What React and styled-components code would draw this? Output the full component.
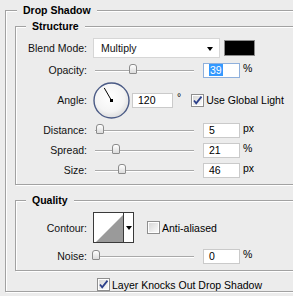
import React from "react";
import styled, { createGlobalStyle } from "styled-components";

const GlobalStyle = createGlobalStyle`
  html, body {
    margin: 0;
    padding: 0;
    background: #ececec;
    overflow: hidden;
  }
  body {
    font-family: "Liberation Sans", Arial, sans-serif;
    font-size: 10.5px;
    color: #111;
  }
`;

const Page = styled.div`
  width: 293px;
  height: 296px;
  overflow: hidden;
  box-sizing: border-box;
  padding: 10px 0 0 5px;
`;

const Group = styled.div`
  width: 330px;
  border: 1px solid #a2a2a2;
  box-shadow: inset 1px 1px 0 #fff, 1px 1px 0 #fff;
  margin: ${(p) => p.$margin || "0"};
  padding-bottom: ${(p) => p.$pb || 0}px;
`;

const Title = styled.div`
  display: table;
  height: 13px;
  line-height: 13px;
  margin: -7px 0 0 ${(p) => p.$indent}px;
  padding: 0 6px;
  background: #ececec;
  font-weight: bold;
  color: #000;
`;

const Rows = styled.div`
  margin-top: 5px;
`;

const Row = styled.div`
  display: flex;
  align-items: center;
  height: ${(p) => p.$h || 20}px;
  margin-bottom: ${(p) => p.$mb || 0}px;
  margin-top: ${(p) => p.$mt || 0}px;
  padding-left: ${(p) => p.$indent || 0}px;
`;

const Label = styled.div`
  flex: none;
  width: 71px;
  margin-right: 6px;
  text-align: right;
  white-space: nowrap;
`;

const Select = styled.div`
  flex: none;
  box-sizing: border-box;
  width: 127px;
  height: 20px;
  display: flex;
  align-items: center;
  justify-content: space-between;
  padding: 0 6px 0 7px;
  background: #fff;
  border: 1px solid #d6d6d6;
`;

const Arrow = styled.span`
  width: 0;
  height: 0;
  border-left: 3px solid transparent;
  border-right: 3px solid transparent;
  border-top: 4px solid #000;
  margin-top: 1px;
`;

const Swatch = styled.div`
  flex: none;
  box-sizing: border-box;
  width: 31px;
  height: 16px;
  margin-left: 4px;
  background: #000;
  border: 1px solid #8a8a8a;
`;

const SliderBox = styled.div`
  position: relative;
  flex: none;
  width: 101px;
  height: 20px;
`;

const Track = styled.div`
  position: absolute;
  left: 2px;
  right: 0;
  top: 10px;
  height: 1px;
  background: #a9a9a9;
  box-shadow: 0 1px 0 #fff;
`;

const Thumb = styled.div`
  position: absolute;
  top: 4px;
  width: 6px;
  height: 8px;
  margin-left: -4px;
  border: 1px solid #8b8b8b;
  border-radius: 3px 3px 1px 1px;
  background: linear-gradient(#ffffff, #dcdcdc);
`;

const Field = styled.div`
  flex: none;
  box-sizing: border-box;
  width: ${(p) => p.$w || 37}px;
  height: 15px;
  margin-left: ${(p) => (p.$ml === undefined ? 9 : p.$ml)}px;
  padding-left: 5px;
  line-height: 13px;
  background: #fff;
  border: 1px solid ${(p) => (p.$focus ? "#8fb0dc" : "#cacaca")};
  color: #000;
`;

const Selected = styled.span`
  background: #3399ff;
  color: #fff;
  padding: 0 1px;
`;

const Unit = styled.span`
  margin-left: ${(p) => p.$ml || 3}px;
  margin-top: ${(p) => p.$mt || -4}px;
  color: #000;
`;

const CheckText = styled.span`
  margin-left: 2px;
  color: #000;
  white-space: nowrap;
`;

const CheckWrap = styled.div`
  display: flex;
  align-items: center;
  margin-left: ${(p) => p.$ml || 0}px;
`;

const ContourBox = styled.div`
  flex: none;
  display: flex;
  box-sizing: border-box;
  width: 41px;
  height: 31px;
  border: 1px solid #3a3a3a;
  background: #fff;
`;

const ContourPreview = styled.div`
  flex: none;
  width: 29px;
  height: 29px;
  border-right: 1px solid #3a3a3a;
`;

const ContourButton = styled.div`
  flex: 1;
  display: flex;
  align-items: center;
  justify-content: center;
`;

const Slider = ({ pos }) => (
  <SliderBox>
    <Track />
    <Thumb style={{ left: pos }} />
  </SliderBox>
);

const Checkbox = ({ checked }) => (
  <svg width="13" height="13" viewBox="0 0 13 13">
    <defs>
      <linearGradient id="cbg" x1="0" y1="0" x2="1" y2="1">
        <stop offset="0" stopColor="#d8d8d8" />
        <stop offset="1" stopColor="#fafafa" />
      </linearGradient>
    </defs>
    <rect x="0.5" y="0.5" width="12" height="12" fill="#fff" stroke="#8f8f8f" />
    <rect x="2" y="2" width="9" height="9" fill="url(#cbg)" />
    {checked && (
      <path d="M3 6.5 L5.2 9.2 L10.5 2.6" fill="none" stroke="#2b3f8a" strokeWidth="1.8" />
    )}
  </svg>
);

const Dial = ({ angle }) => {
  const r = 14.5;
  const a = (angle * Math.PI) / 180;
  const x = 18.5 + Math.cos(a) * r;
  const y = 18.5 - Math.sin(a) * r;
  return (
    <svg width="37" height="37" viewBox="0 0 37 37" style={{ flex: "none" }}>
      <defs>
        <radialGradient id="dialg" cx="0.45" cy="0.4" r="0.6">
          <stop offset="0" stopColor="#ffffff" />
          <stop offset="0.7" stopColor="#f4f4f4" />
          <stop offset="1" stopColor="#dedede" />
        </radialGradient>
      </defs>
      <circle cx="18.5" cy="18.5" r="17.5" fill="url(#dialg)" stroke="#4a5a85" strokeWidth="1.4" />
      <line x1="18.5" y1="18.5" x2={x} y2={y} stroke="#000" strokeWidth="1" />
      <rect x="17" y="17" width="3" height="3" fill="#000" />
    </svg>
  );
};

const App = () => (
  <Page>
    <GlobalStyle />
    <Group>
      <Title $indent={11}>Drop Shadow</Title>
      <Group $margin="9px 0 0 9px" $pb={4}>
        <Title $indent={10}>Structure</Title>
        <Rows>
          <Row $mb={2}>
            <Label>Blend Mode:</Label>
            <Select>
              <span>Multiply</span>
              <Arrow />
            </Select>
            <Swatch />
          </Row>
          <Row>
            <Label>Opacity:</Label>
            <Slider pos={40} />
            <Field $focus>
              <Selected>39</Selected>
            </Field>
            <Unit>%</Unit>
          </Row>
          <Row $h={40}>
            <Label>Angle:</Label>
            <Dial angle={120} />
            <Field $w={41} $ml={2}>120</Field>
            <Unit $ml={4} $mt={-6}>°</Unit>
            <CheckWrap $ml={10}>
              <Checkbox checked />
              <CheckText>Use Global Light</CheckText>
            </CheckWrap>
          </Row>
          <Row>
            <Label>Distance:</Label>
            <Slider pos={7} />
            <Field>5</Field>
            <Unit>px</Unit>
          </Row>
          <Row>
            <Label>Spread:</Label>
            <Slider pos={23} />
            <Field>21</Field>
            <Unit>%</Unit>
          </Row>
          <Row>
            <Label>Size:</Label>
            <Slider pos={29} />
            <Field>46</Field>
            <Unit>px</Unit>
          </Row>
        </Rows>
      </Group>
      <Group $margin="15px 0 0 9px" $pb={4}>
        <Title $indent={10}>Quality</Title>
        <Row $h={31} $mt={5}>
          <Label>Contour:</Label>
          <ContourBox>
            <ContourPreview>
              <svg width="29" height="29" viewBox="0 0 29 29">
                <polygon points="2,29 29,2 29,29" fill="#9a9a9a" />
              </svg>
            </ContourPreview>
            <ContourButton>
              <Arrow />
            </ContourButton>
          </ContourBox>
          <CheckWrap $ml={13}>
            <Checkbox />
            <CheckText>Anti-aliased</CheckText>
          </CheckWrap>
        </Row>
        <Row $mt={3}>
          <Label>Noise:</Label>
          <Slider pos={3} />
          <Field>0</Field>
          <Unit>%</Unit>
        </Row>
      </Group>
      <Row $h={13} $mt={7} $indent={91}>
        <CheckWrap>
          <Checkbox checked />
          <CheckText>Layer Knocks Out Drop Shadow</CheckText>
        </CheckWrap>
      </Row>
    </Group>
  </Page>
);

export default App;
